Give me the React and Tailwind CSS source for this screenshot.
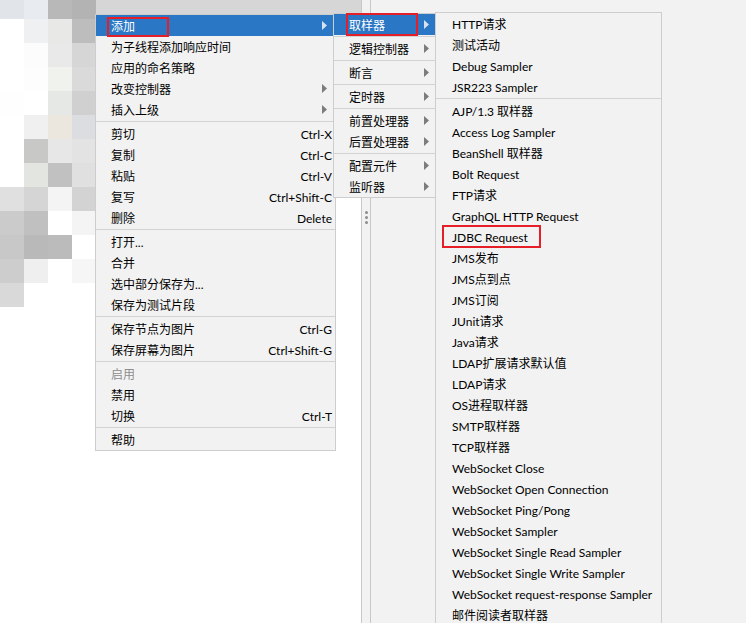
import React from 'react';

const font = "font-['Lato','Noto_Sans_CJK_SC',sans-serif]";

// blurred area at the top left of the tree panel
const mosaic = [
  ['#e1e4e9', '#e8ebf0', '#b8b8b8', '#b3b3b3'],
  ['#ffffff', '#eff0f2', '#e8e9e7', '#bdbdbd'],
  ['#ffffff', '#fcfcfc', '#e9e9e9', '#d6d6d6'],
  ['#ffffff', '#fdfdfd', '#f0f2ee', '#dadada'],
  ['#fefefe', '#ffffff', '#e6e8e6', '#d0d0d0'],
  ['#ffffff', '#f0f0f0', '#ebe7de', '#dcdde0'],
  ['#ffffff', '#c8c8c6', '#e7e7e7', '#e3e3e3'],
  ['#ffffff', '#e3e5e0', '#c1c1c1', '#e0e0e0'],
  ['#e0e0e0', '#d5d5d5', '#f4f4f4', '#d3d3d3'],
  ['#cbcbcb', '#c0c0c0', '#ffffff', '#f4f4f4'],
  ['#c8c8c8', '#b9b9b9', '#bbbbbb', '#ffffff'],
  ['#cdcdcd', '#efefef', '#ffffff', '#f6f6f6'],
  ['#d9d9d9', '#ffffff', '#ffffff', '#ffffff'],
];

const Mosaic = () => (
  <svg width="96" height="307" viewBox="0 0 96 307" className="shrink-0">
    {mosaic.map((row, i) =>
      row.map((c, j) => (
        <rect
          key={`${i}-${j}`}
          x={j * 24}
          y={i === 0 ? 0 : 19 + (i - 1) * 24}
          width="24"
          height={i === 0 ? 19 : 24}
          fill={c}
        />
      ))
    )}
  </svg>
);

const Arrow = ({ light }) => (
  <svg width="5" height="9" viewBox="0 0 5 9" className="shrink-0">
    <path d="M0 0L5 4.5L0 9Z" fill={light ? '#d6e2f0' : '#7c7c7c'} />
  </svg>
);

const Sep = () => <div className="my-px h-px bg-[#d2d2d2]" />;

const RedBox = ({ className }) => (
  <div className={`pointer-events-none absolute border-2 border-[#e61e28] ${className}`} />
);

const menu1 = [
  { t: '添加', arrow: true, active: true },
  { t: '为子线程添加响应时间' },
  { t: '应用的命名策略' },
  { t: '改变控制器', arrow: true },
  { t: '插入上级', arrow: true },
  'sep',
  { t: '剪切', k: 'Ctrl-X' },
  { t: '复制', k: 'Ctrl-C' },
  { t: '粘贴', k: 'Ctrl-V' },
  { t: '复写', k: 'Ctrl+Shift-C' },
  { t: '删除', k: 'Delete' },
  'sep',
  { t: '打开...' },
  { t: '合并' },
  { t: '选中部分保存为...' },
  { t: '保存为测试片段' },
  'sep',
  { t: '保存节点为图片', k: 'Ctrl-G' },
  { t: '保存屏幕为图片', k: 'Ctrl+Shift-G' },
  'sep',
  { t: '启用', disabled: true },
  { t: '禁用' },
  { t: '切换', k: 'Ctrl-T' },
  'sep',
  { t: '帮助' },
];

const menu2 = [
  { t: '取样器', active: true },
  'sep',
  { t: '逻辑控制器' },
  'sep',
  { t: '断言' },
  'sep',
  { t: '定时器' },
  'sep',
  { t: '前置处理器' },
  { t: '后置处理器' },
  'sep',
  { t: '配置元件' },
  { t: '监听器' },
];

const menu3 = [
  'HTTP请求',
  '测试活动',
  'Debug Sampler',
  'JSR223 Sampler',
  'sep',
  'AJP/1.3 取样器',
  'Access Log Sampler',
  'BeanShell 取样器',
  'Bolt Request',
  'FTP请求',
  'GraphQL HTTP Request',
  'JDBC Request',
  'JMS发布',
  'JMS点到点',
  'JMS订阅',
  'JUnit请求',
  'Java请求',
  'LDAP扩展请求默认值',
  'LDAP请求',
  'OS进程取样器',
  'SMTP取样器',
  'TCP取样器',
  'WebSocket Close',
  'WebSocket Open Connection',
  'WebSocket Ping/Pong',
  'WebSocket Sampler',
  'WebSocket Single Read Sampler',
  'WebSocket Single Write Sampler',
  'WebSocket request-response Sampler',
  '邮件阅读者取样器',
];

const MainMenu = () => (
  <div className="absolute left-[95px] top-[14px] w-[241px] border border-[#cdcdcd] bg-[#f2f2f2]">
    {menu1.map((it, i) =>
      it === 'sep' ? (
        <Sep key={i} />
      ) : (
        <div
          key={i}
          className={`relative flex h-[21px] items-center pl-[15px] pt-[2px] ${
            it.active ? 'bg-[#2977c5] text-white' : it.disabled ? 'text-[#8d8d8d]' : 'text-black'
          }`}
        >
          <span className="flex-1 whitespace-nowrap">{it.t}</span>
          {it.arrow && (
            <span className="mr-[8px] -mt-[2px] flex">
              <Arrow light={it.active} />
            </span>
          )}
          {it.k && <span className="mr-[3px] whitespace-nowrap">{it.k}</span>}
          {it.active && <RedBox className="left-[11px] top-[2px] h-[20px] w-[62px]" />}
        </div>
      )
    )}
  </div>
);

const AddMenu = () => (
  <div className="absolute left-[333px] top-[13px] w-[103px] border border-[#cdcdcd] bg-[#f2f2f2]">
    {menu2.map((it, i) =>
      it === 'sep' ? (
        <Sep key={i} />
      ) : (
        <div
          key={i}
          className={`relative flex h-[21px] items-center pl-[15px] pt-[2px] ${
            it.active ? 'bg-[#2977c5] text-white' : 'text-black'
          }`}
        >
          <span className="flex-1 whitespace-nowrap">{it.t}</span>
          <span className="mr-[6px] -mt-[2px] flex">
            <Arrow light={it.active} />
          </span>
          {it.active && <RedBox className="-top-px left-[12px] h-[23px] w-[72px]" />}
        </div>
      )
    )}
  </div>
);

const SamplerMenu = () => (
  <div className="absolute left-[435px] top-[12px] w-[227px] border border-[#cdcdcd] bg-[#f2f2f2]">
    {menu3.map((t, i) =>
      t === 'sep' ? (
        <Sep key={i} />
      ) : (
        <div key={i} className="relative flex h-[21px] items-center pl-[16px] pt-[2px] text-black">
          <span className="whitespace-nowrap">{t}</span>
          {t === 'JDBC Request' && <RedBox className="-top-px left-[6px] h-[23px] w-[99px]" />}
        </div>
      )
    )}
  </div>
);

export default function App() {
  return (
    <div className={`relative flex h-[623px] w-[746px] overflow-hidden bg-[#f2f2f2] text-[12px] ${font}`}>
      {/* tree panel */}
      <div className="flex w-[361px] shrink-0 bg-white">
        <Mosaic />
        <div className="flex flex-1 flex-col">
          <div className="h-[14px] bg-[#d6d6d6]" />
        </div>
      </div>

      {/* splitter */}
      <div className="flex w-[10px] shrink-0 flex-col items-center gap-[2px] border-x border-[#c8c8c8] bg-[#f2f2f2] pt-[211px]">
        <div className="h-[3px] w-[3px] rounded-full bg-[#8c8c8c]" />
        <div className="h-[3px] w-[3px] rounded-full bg-[#8c8c8c]" />
        <div className="h-[3px] w-[3px] rounded-full bg-[#8c8c8c]" />
      </div>

      {/* editor panel */}
      <div className="flex-1 bg-[#f2f2f2]" />

      <MainMenu />
      <AddMenu />
      <SamplerMenu />
    </div>
  );
}
